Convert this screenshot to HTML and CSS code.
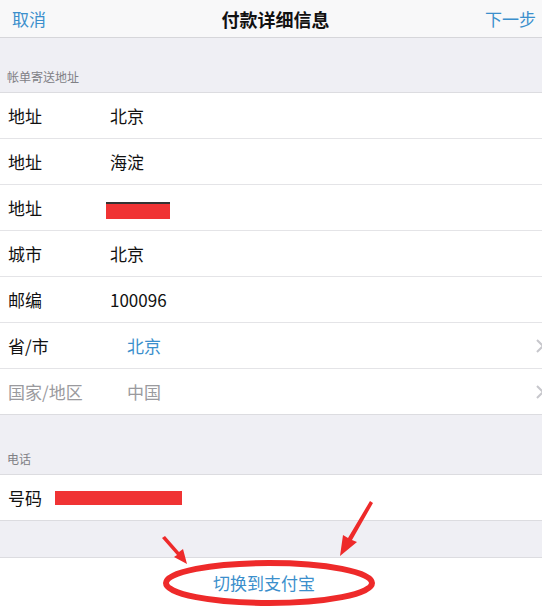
FILE: index.html
```html
<!DOCTYPE html>
<html lang="zh-CN">
<head>
    <meta charset="UTF-8">
    <meta name="viewport" content="width=device-width, initial-scale=1.0">
    <title>付款详细信息</title>
    <link rel="stylesheet" href="styles.css">
</head>
<body>

    <div class="screen">
        <div class="navbar">
            <span class="nav-btn">取消</span>
            <span class="nav-title">付款详细信息</span>
            <span class="nav-btn">下一步</span>
        </div>

        <div class="section-head first">帐单寄送地址</div>
        <ul class="group">
            <li class="row"><span class="label">地址</span><span class="value">北京</span></li>
            <li class="row"><span class="label">地址</span><span class="value">海淀</span></li>
            <li class="row"><span class="label">地址</span><span class="value"><span class="redact small"></span></span></li>
            <li class="row"><span class="label">城市</span><span class="value">北京</span></li>
            <li class="row"><span class="label">邮编</span><span class="value">100096</span></li>
            <li class="row">
                <span class="label">省/市</span><span class="value picker blue">北京</span>
                <svg class="chevron" width="10" height="16" viewBox="0 0 10 16"><path d="M2 2 L8 8 L2 14" fill="none" stroke="#c7c7cc" stroke-width="2"/></svg>
            </li>
            <li class="row">
                <span class="label muted">国家/地区</span><span class="value picker muted">中国</span>
                <svg class="chevron" width="10" height="16" viewBox="0 0 10 16"><path d="M2 2 L8 8 L2 14" fill="none" stroke="#c7c7cc" stroke-width="2"/></svg>
            </li>
        </ul>

        <div class="section-head phone">电话</div>
        <ul class="group">
            <li class="row"><span class="label">号码</span><span class="redact wide"></span></li>
        </ul>

        <div class="spacer"></div>
        <div class="switch-row">切换到支付宝</div>

        <!-- 手绘标注 -->
        <svg class="marks" width="542" height="606" viewBox="0 0 542 606">
            <ellipse cx="269" cy="583" rx="103" ry="20" fill="none" stroke="#ee2a2a" stroke-width="6"/>
            <polygon points="162,538 165,536 179,552 183,549 187,564 174,557 177,555" fill="#ee2a2a"/>
            <polygon points="370,501 373,503 352,540 357,542 340,556 343,535 348,538" fill="#ee2a2a"/>
        </svg>
    </div>

</body>
</html>
```

FILE: styles.css
```css
body {
    margin: 0;
    font-family: "Noto Sans CJK SC", "Noto Sans", sans-serif;
    background: #efeff4;
    color: #111;
}
.screen {
    position: relative;
    width: 542px;
    height: 606px;
    overflow: hidden;
    background: #efeff4;
}
.navbar {
    height: 37px;
    display: flex;
    align-items: center;
    justify-content: space-between;
    padding: 0 6px 0 12px;
    background: #f8f8f9;
    border-bottom: 1px solid #d6d6da;
}
.nav-btn {
    color: #3b8fcc;
    font-size: 17px;
}
.nav-title {
    font-size: 18px;
    font-weight: bold;
    color: #111;
    margin-left: 20px;
}
.section-head {
    padding: 0 7px 7px;
    display: flex;
    align-items: flex-end;
    font-size: 12px;
    color: #808085;
    border-bottom: 1px solid #dcdce0;
}
.section-head.first {
    height: 47px;
}
.section-head.phone {
    height: 52px;
}
.group {
    list-style: none;
    margin: 0;
    padding: 0;
    background: #fff;
    border-bottom: 1px solid #dcdce0;
}
.row {
    height: 45px;
    display: flex;
    align-items: center;
    border-top: 1px solid #e4e4e7;
    padding-left: 8px;
    font-size: 17px;
}
.row:first-child {
    border-top: none;
}
.label {
    width: 102px;
    flex: none;
}
.value {
    flex: 1;
}
.picker {
    padding-left: 17px;
}
.blue {
    color: #3b8fcc;
}
.muted {
    color: #9a9a9e;
}
.chevron {
    flex: none;
    margin-right: -3px;
}
.redact {
    display: inline-block;
    background: #f03334;
    vertical-align: middle;
}
.redact.small {
    width: 64px;
    height: 15px;
    margin-left: -4px;
    border-top: 2px solid #333;
}
.redact.wide {
    width: 127px;
    height: 14px;
    margin-left: -55px;
}
.spacer {
    height: 36px;
}
.switch-row {
    height: 48px;
    background: #fff;
    border-top: 1px solid #dcdce0;
    display: flex;
    align-items: center;
    justify-content: center;
    color: #3b8fcc;
    font-size: 17px;
    padding-right: 14px;
}
.marks {
    position: absolute;
    left: 0;
    top: 0;
    pointer-events: none;
}
```
